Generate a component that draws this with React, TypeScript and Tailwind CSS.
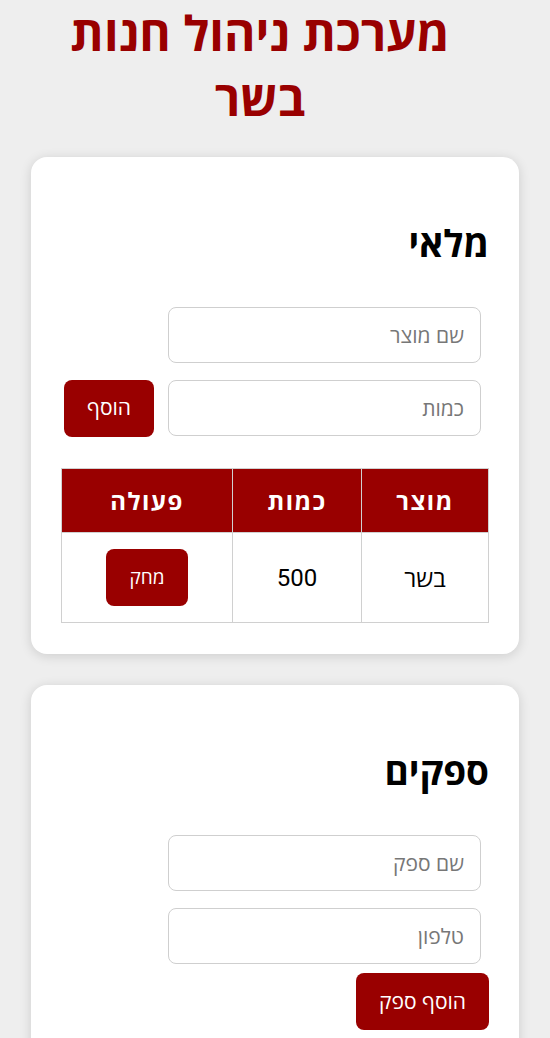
import React from "react";

const font = { fontFamily: '"Open Sans", "Liberation Sans", sans-serif' };

function Field({ placeholder }: { placeholder: string }) {
  return (
    <input
      placeholder={placeholder}
      className="m-2 w-[313px] h-[56px] rounded-[8px] border-[1.5px] border-[#cfcfcf] bg-white px-4 text-[21px] text-black placeholder:text-[#777] outline-none"
    />
  );
}

function RedButton({ children }: { children: React.ReactNode }) {
  return (
    <button className="h-[57px] rounded-[8px] bg-[#990000] px-[23px] text-[21px] text-white">
      {children}
    </button>
  );
}

export default function App() {
  return (
    <div dir="rtl" className="min-h-[1038px] bg-[#eeeeee] px-[31px] text-black" style={font}>
      <h1 className="pr-[30px] text-center text-[48px] font-bold leading-[65px] text-[#990000]">
        מערכת ניהול חנות
        <br />
        בשר
      </h1>

      <div className="mt-[27px] rounded-[16px] bg-white px-[30px] pt-[30px] pb-[31px] shadow-[0_2px_12px_rgba(0,0,0,0.14)]">
        <h2 className="mt-[36px] text-[37px] font-bold leading-[40px]">מלאי</h2>
        <div className="mt-[36px] flex flex-wrap items-center gap-x-[6px] gap-y-[1px]">
          <Field placeholder="שם מוצר" />
          <Field placeholder="כמות" />
          <RedButton>הוסף</RedButton>
        </div>
        <table className="mt-[24px] w-full border-collapse text-center text-[24px]">
          <thead>
            <tr className="h-[64px] bg-[#990000] text-white">
              <th className="w-[127px] border border-[#d0d0d0] font-bold tracking-[1.5px]">מוצר</th>
              <th className="w-[129px] border border-[#d0d0d0] font-bold tracking-[1.5px]">כמות</th>
              <th className="border border-[#d0d0d0] font-bold tracking-[1.5px]">פעולה</th>
            </tr>
          </thead>
          <tbody>
            <tr className="h-[90px]">
              <td className="border border-[#d0d0d0]">בשר</td>
              <td className="border border-[#d0d0d0]" style={{ fontFamily: "Roboto, sans-serif" }}>500</td>
              <td className="border border-[#d0d0d0]">
                <button className="h-[57px] rounded-[8px] bg-[#990000] px-[23px] text-[19px] text-white">מחק</button>
              </td>
            </tr>
          </tbody>
        </table>
      </div>

      <div className="mt-[31px] rounded-[16px] bg-white px-[30px] pt-[30px] pb-[31px] shadow-[0_2px_12px_rgba(0,0,0,0.14)]">
        <h2 className="mt-[36px] text-[37px] font-bold leading-[40px]">ספקים</h2>
        <div className="mt-[36px] flex flex-wrap items-center gap-x-[6px] gap-y-[1px]">
          <Field placeholder="שם ספק" />
          <Field placeholder="טלפון" />
          <RedButton>הוסף ספק</RedButton>
        </div>
        <div className="h-[200px]" />
      </div>
    </div>
  );
}
